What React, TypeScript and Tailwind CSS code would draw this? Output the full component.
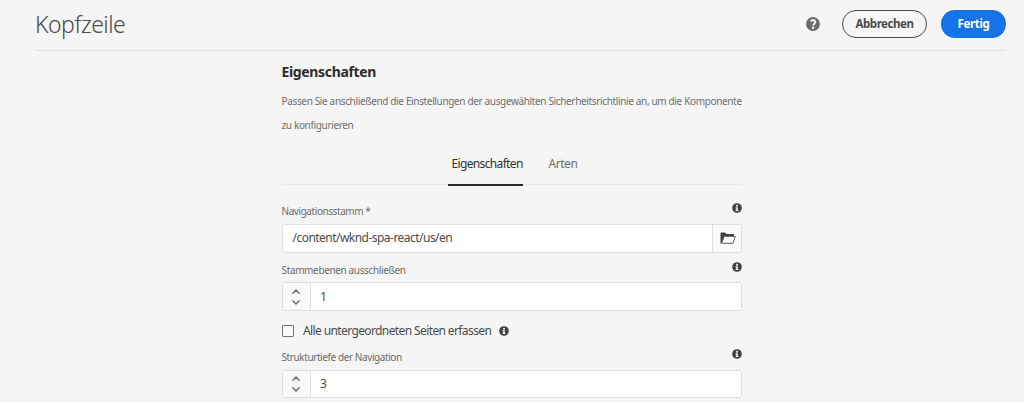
import React from "react";

function InfoIcon() {
  return (
    <svg className="block h-[10px] w-[10px] shrink-0" viewBox="0 0 20 20">
      <circle cx="10" cy="10" r="9.6" fill="#404040" />
      <circle cx="10" cy="5.4" r="2" fill="#f5f5f5" />
      <path d="M7 8.6h4.6v5.2H13V16H7v-2.2h1.5v-3H7z" fill="#f5f5f5" />
    </svg>
  );
}

function HelpIcon() {
  return (
    <svg className="block h-[14px] w-[14px]" viewBox="0 0 28 28">
      <circle cx="14" cy="14" r="14" fill="#6e6e6e" />
      <path d="M9.4 8.4C12.8 5.2 18.6 6.2 18.6 10.2c0 3.2-4 3.3-4 6.8" fill="none" stroke="#f5f5f5" strokeWidth="3.8" />
      <circle cx="14.3" cy="21.6" r="2.4" fill="#f5f5f5" />
    </svg>
  );
}

function FolderIcon() {
  return (
    <svg className="block h-[12px] w-[16px]" viewBox="0 0 16 12">
      <path d="M.5 11.4V1Q.5.4 1.2.4h3.6L6.5 2h6.8q.7 0 .7.7V4H4.1L1.5 11.6z" fill="#404040" />
      <path d="M4.4 4.4h10.9L13 11.3H1.6z" fill="#fafafa" stroke="#505050" strokeWidth="0.9" strokeLinejoin="round" />
    </svg>
  );
}

function Chevron({ up = false }: { up?: boolean }) {
  return (
    <svg className="block h-[5px] w-[8px]" viewBox="0 0 8 5">
      <path d={up ? "M.8 4.2 4 1l3.2 3.2" : "M.8.8 4 4 7.2.8"} fill="none" stroke="#6a6a6a" strokeWidth="1.4" strokeLinecap="round" strokeLinejoin="round" />
    </svg>
  );
}

function FieldLabel({ text, spacing }: { text: string; spacing: string }) {
  return (
    <div className="flex h-[22px] justify-between">
      <span className={`-ml-[0.5px] whitespace-nowrap text-[10px] leading-[20px] text-[#6a6a6a] ${spacing}`}>{text}</span>
      <span className="pt-[2px]"><InfoIcon /></span>
    </div>
  );
}

function NumberField({ value, height }: { value: string; height: string }) {
  return (
    <div className={`flex overflow-hidden rounded-[3px] border border-[#dedede] bg-white ${height}`}>
      <div className="flex w-[28px] flex-col items-center justify-center gap-[6px] border-r border-[#dedede] bg-[#fafafa] pr-[1px]">
        <Chevron up />
        <Chevron />
      </div>
      <span className="flex items-center pl-[9px] text-[12px] text-[#4b4b4b]">{value}</span>
    </div>
  );
}

export default function App() {
  return (
    <div className="h-[402px] overflow-hidden bg-[#f5f5f5] font-['Noto_Sans',sans-serif]">
      <header className="ml-[35px] mr-[18px] flex h-[51px] justify-between border-b border-[#dfdfdf]">
        <h1 className="pt-[8px] text-[23px] font-light leading-[32px] tracking-[-0.5px] text-[#4b4b4b]">Kopfzeile</h1>
        <div className="flex h-[28px] items-center pt-[20px]">
          <HelpIcon />
          <button className="ml-[22px] h-[28px] w-[85px] rounded-full border border-[#4b4b4b] text-[11.5px] font-bold leading-[26px] tracking-[-0.45px] text-[#4b4b4b]">Abbrechen</button>
          <button className="ml-[14px] h-[28px] w-[65px] rounded-full bg-[#1473e6] text-[11.5px] font-bold leading-[28px] tracking-[-0.35px] text-white">Fertig</button>
        </div>
      </header>

      <main className="ml-[282px] w-[460px]">
        <h2 className="-ml-[0.5px] pt-[11px] text-[14px] font-bold leading-[20px] tracking-[-0.35px] text-[#2c2c2c]">Eigenschaften</h2>
        <p className="-ml-[0.5px] mt-[7px] whitespace-nowrap text-[10px] leading-[24px] tracking-[-0.35px] text-[#6e6e6e]">
          Passen Sie anschließend die Einstellungen der ausgewählten Sicherheitsrichtlinie an, um die Komponente
          <br />
          zu konfigurieren
        </p>

        <nav className="mt-[12px] flex h-[36px] border-b border-[#e8e8e8] pl-[165.5px] text-[12px] leading-[30px] tracking-[-0.65px]">
          <span className="h-[37px] w-[75px] border-b-2 border-[#2c2c2c] pl-[4px] text-[#323232]">Eigenschaften</span>
          <span className="ml-[26px] tracking-[-0.45px] text-[#6e6e6e]">Arten</span>
        </nav>

        <section className="mt-[16px]">
          <div className="flex h-[23px] justify-between">
            <span className="-ml-[0.5px] text-[10px] leading-[20px] tracking-[-0.43px] text-[#6a6a6a]">Navigationsstamm *</span>
            <span className="pt-[2px]"><InfoIcon /></span>
          </div>
          <div className="flex h-[29px] overflow-hidden rounded-[3px] border border-[#dedede] bg-white">
            <span className="flex flex-1 pl-[9.5px] text-[12px] leading-[26px] tracking-[-0.53px] text-[#4b4b4b]">/content/wknd-spa-react/us/en</span>
            <div className="flex w-[29px] items-center justify-center border-l border-[#dedede] bg-[#fafafa] pb-[2px] pl-[1px]">
              <FolderIcon />
            </div>
          </div>
        </section>

        <section className="mt-[7px]">
          <FieldLabel text="Stammebenen ausschließen" spacing="tracking-[-0.36px]" />
          <NumberField value="1" height="h-[29px]" />
        </section>

        <div className="mt-[10px] flex h-[20px] items-center">
          <span className="h-[12px] w-[12px] rounded-[1px] border border-[#707070] bg-[#fafafa]" />
          <span className="ml-[9px] mr-[7px] w-[189px] whitespace-nowrap text-[12px] tracking-[-0.61px] text-[#4b4b4b]">Alle untergeordneten Seiten erfassen</span>
          <InfoIcon />
        </div>

        <section className="mt-[6px]">
          <FieldLabel text="Strukturtiefe der Navigation" spacing="tracking-[-0.41px]" />
          <div className="pt-[1px]"><NumberField value="3" height="h-[28px]" /></div>
        </section>
      </main>
    </div>
  );
}
